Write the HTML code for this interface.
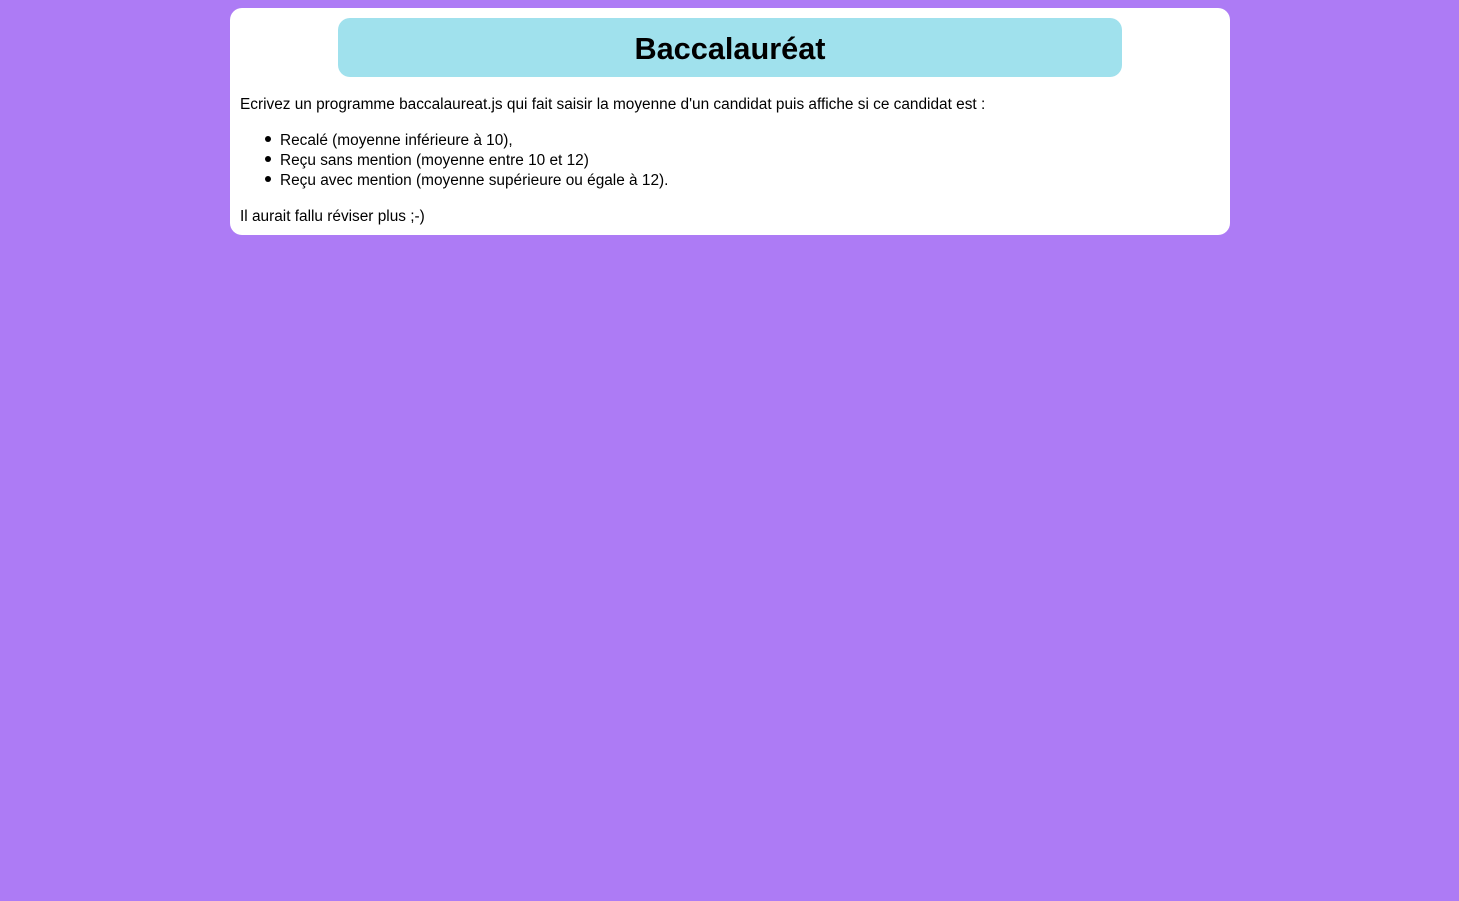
<!DOCTYPE html>
<html><head><meta charset="utf-8"><style>
html,body{margin:0;padding:0;background:#ad7bf5;width:1459px;height:901px;overflow:hidden}
body{font-family:"Liberation Sans",sans-serif;font-size:15.4px;color:#000}
.card{position:absolute;left:230px;top:8px;width:1000px;height:227px;background:#fff;border-radius:12px}
.h{position:absolute;left:108px;top:10px;width:784px;height:59px;background:#a0e1ed;border-radius:12px;text-align:center;line-height:61px;font-weight:bold;font-size:30.7px}
.t{position:absolute;left:10px;white-space:nowrap;line-height:20px}
.b{position:absolute;left:35px;width:6px;height:6px;border-radius:50%;background:#000}
</style></head><body>
<div class="card">
<div class="h">Baccalauréat</div>
<div class="t" style="top:87px">Ecrivez un programme baccalaureat.js qui fait saisir la moyenne d'un candidat puis affiche si ce candidat est :</div>
<div class="b" style="top:128px"></div><div class="t" style="left:50px;top:123px">Recalé (moyenne inférieure à 10),</div>
<div class="b" style="top:148px"></div><div class="t" style="left:50px;top:143px">Reçu sans mention (moyenne entre 10 et 12)</div>
<div class="b" style="top:168px"></div><div class="t" style="left:50px;top:163px">Reçu avec mention (moyenne supérieure ou égale à 12).</div>
<div class="t" style="top:199px">Il aurait fallu réviser plus ;-)</div>
</div>
</body></html>
